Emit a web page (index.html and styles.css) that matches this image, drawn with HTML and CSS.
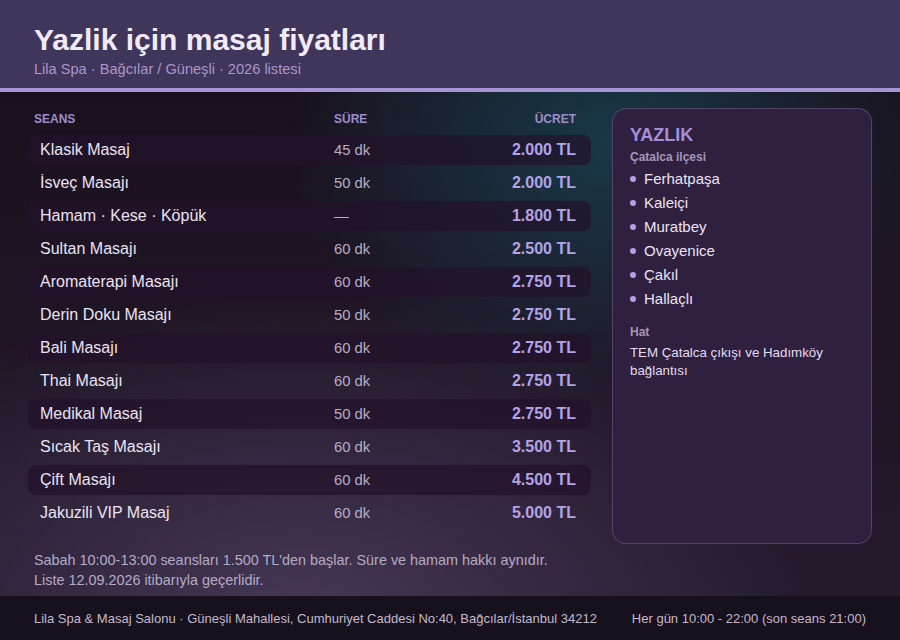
FILE: index.html
```html
<!DOCTYPE html>
<html lang="tr">
<head>
<meta charset="utf-8">
<title>Yazlik için masaj fiyatları</title>
<link rel="stylesheet" href="styles.css">
</head>
<body>
<div class="page">
  <header class="top">
    <h1 class="title">Yazlik için masaj fiyatları</h1>
    <p class="subtitle">Lila Spa · Bağcılar / Güneşli · 2026 listesi</p>
  </header>
  <main class="main">
    <div class="content">
      <section class="prices">
        <div class="thead">
          <span>Seans</span><span>Süre</span><span class="right">Ücret</span>
        </div>
        <div class="row alt"><span class="name">Klasik Masaj</span><span class="dur">45 dk</span><span class="price">2.000 TL</span></div>
        <div class="row"><span class="name">İsveç Masajı</span><span class="dur">50 dk</span><span class="price">2.000 TL</span></div>
        <div class="row alt"><span class="name">Hamam · Kese · Köpük</span><span class="dur">—</span><span class="price">1.800 TL</span></div>
        <div class="row"><span class="name">Sultan Masajı</span><span class="dur">60 dk</span><span class="price">2.500 TL</span></div>
        <div class="row alt"><span class="name">Aromaterapi Masajı</span><span class="dur">60 dk</span><span class="price">2.750 TL</span></div>
        <div class="row"><span class="name">Derin Doku Masajı</span><span class="dur">50 dk</span><span class="price">2.750 TL</span></div>
        <div class="row alt"><span class="name">Bali Masajı</span><span class="dur">60 dk</span><span class="price">2.750 TL</span></div>
        <div class="row"><span class="name">Thai Masajı</span><span class="dur">60 dk</span><span class="price">2.750 TL</span></div>
        <div class="row alt"><span class="name">Medikal Masaj</span><span class="dur">50 dk</span><span class="price">2.750 TL</span></div>
        <div class="row"><span class="name">Sıcak Taş Masajı</span><span class="dur">60 dk</span><span class="price">3.500 TL</span></div>
        <div class="row alt"><span class="name">Çift Masajı</span><span class="dur">60 dk</span><span class="price">4.500 TL</span></div>
        <div class="row"><span class="name">Jakuzili VIP Masaj</span><span class="dur">60 dk</span><span class="price">5.000 TL</span></div>
      </section>
      <aside class="card">
        <h2 class="card-title">YAZLIK</h2>
        <div class="card-label">Çatalca ilçesi</div>
        <ul class="places">
          <li>Ferhatpaşa</li>
          <li>Kaleiçi</li>
          <li>Muratbey</li>
          <li>Ovayenice</li>
          <li>Çakıl</li>
          <li>Hallaçlı</li>
        </ul>
        <div class="card-label hat">Hat</div>
        <p class="card-text">TEM Çatalca çıkışı ve Hadımköy bağlantısı</p>
      </aside>
    </div>
    <div class="notes">
      <p>Sabah 10:00-13:00 seansları 1.500 TL'den başlar. Süre ve hamam hakkı aynıdır.</p>
      <p>Liste 12.09.2026 itibarıyla geçerlidir.</p>
    </div>
  </main>
  <footer class="foot">
    <span>Lila Spa &amp; Masaj Salonu · Güneşli Mahallesi, Cumhuriyet Caddesi No:40, Bağcılar/İstanbul 34212</span>
    <span>Her gün 10:00 - 22:00 (son seans 21:00)</span>
  </footer>
</div>
</body>
</html>
```

FILE: styles.css
```css
* { box-sizing: border-box; }
html, body { margin: 0; padding: 0; }
body {
  font-family: "Liberation Sans", Arial, sans-serif;
  background: #18111f;
  color: #e8e0f0;
}
.page {
  width: 900px;
  height: 640px;
  display: flex;
  flex-direction: column;
  overflow: hidden;
}
.top {
  height: 92px;
  background: #40355a;
  border-bottom: 4px solid #a794d6;
  padding: 24px 34px 0;
}
.title {
  margin: 0;
  font-size: 30px;
  line-height: 32px;
  font-weight: bold;
  color: #f1eaf8;
}
.subtitle {
  margin: 4px 0 0;
  font-size: 14.6px;
  line-height: 18px;
  color: #a898cc;
}
.main {
  flex: 1;
  padding: 16px 28px 6px;
  background:
    radial-gradient(ellipse 320px 260px at 610px 50px, rgba(22, 88, 102, 0.55), rgba(22, 88, 102, 0) 100%),
    radial-gradient(ellipse 520px 320px at 300px 520px, rgba(74, 60, 92, 0.85), rgba(74, 60, 92, 0) 100%),
    linear-gradient(180deg, #1a111e 0%, #241a2c 100%);
}
.content {
  display: grid;
  grid-template-columns: 1fr 260px;
  gap: 21px;
  height: 436px;
}
.prices {
  display: flex;
  flex-direction: column;
  gap: 3px;
}
.thead {
  display: grid;
  grid-template-columns: 300px 1fr auto;
  height: 22px;
  align-items: center;
  padding: 0 15px 0 6px;
  font-size: 12px;
  font-weight: bold;
  text-transform: uppercase;
  color: #9d8dcb;
  margin-bottom: 2px;
}
.thead .right { text-align: right; }
.row {
  display: grid;
  grid-template-columns: 294px 1fr auto;
  align-items: center;
  height: 30px;
  padding: 0 15px 0 12px;
  border-radius: 8px;
}
.row.alt { background: rgba(34, 18, 42, 0.72); }
.name {
  font-size: 16px;
  color: #ebe3f3;
}
.dur {
  font-size: 14.8px;
  color: #b7adc6;
}
.price {
  font-size: 16px;
  font-weight: bold;
  color: #b4a3e8;
  text-align: right;
}
.card {
  background: #2f2040;
  border: 1px solid rgba(190, 170, 220, 0.25);
  border-radius: 14px;
  padding: 16px 17px;
}
.card-title {
  margin: 0;
  font-size: 18px;
  line-height: 20px;
  font-weight: bold;
  color: #a58fd9;
}
.card-label {
  margin-top: 4px;
  font-size: 12px;
  line-height: 16px;
  font-weight: bold;
  color: #a796b8;
}
.places {
  list-style: none;
  margin: 1px 0 0;
  padding: 0;
}
.places li {
  display: flex;
  align-items: center;
  gap: 8px;
  height: 24px;
  font-size: 15px;
  color: #ebe3f3;
}
.places li::before {
  content: "";
  width: 6px;
  height: 6px;
  border-radius: 50%;
  background: #b39fe6;
  flex: none;
  margin-top: 2px;
}
.card-label.hat { margin-top: 14px; }
.card-text {
  margin: 4px 0 0;
  font-size: 13.3px;
  line-height: 18px;
  color: #e4dcee;
}
.notes {
  margin-top: 6px;
  padding: 0 6px;
  font-size: 14.4px;
  line-height: 20px;
  color: #b5abc4;
}
.notes p { margin: 0; }
.foot {
  height: 44px;
  flex: none;
  background: #17101d;
  display: flex;
  align-items: center;
  justify-content: space-between;
  padding: 0 34px;
  font-size: 13px;
  color: #c3bacd;
}
```
